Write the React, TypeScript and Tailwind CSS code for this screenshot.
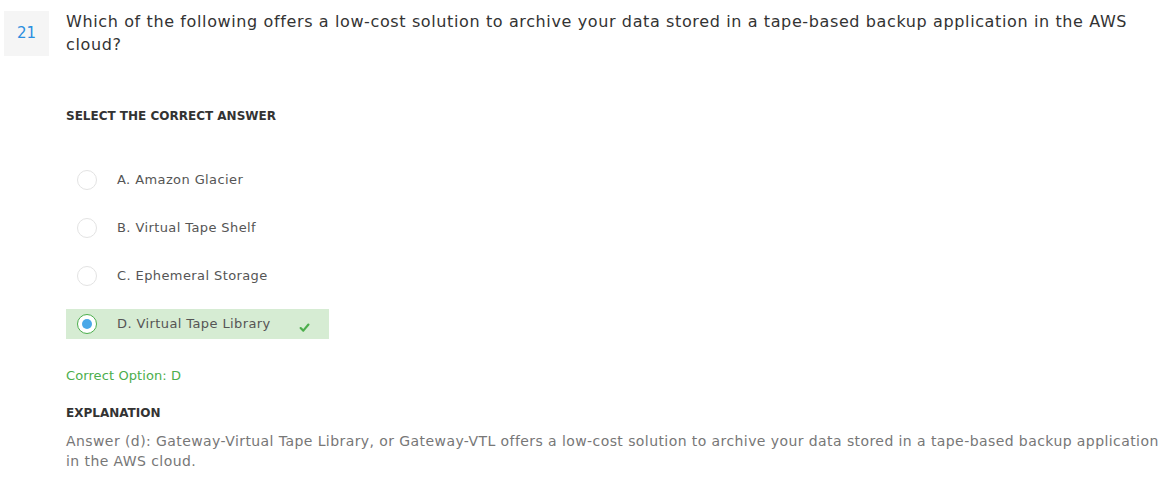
import React from "react";

type Option = { key: string; label: string };

const options: Option[] = [
  { key: "A", label: "Amazon Glacier" },
  { key: "B", label: "Virtual Tape Shelf" },
  { key: "C", label: "Ephemeral Storage" },
  { key: "D", label: "Virtual Tape Library" },
];

const correct = "D";

function Radio({ checked }: { checked: boolean }) {
  if (checked) {
    return (
      <span className="flex h-5 w-5 items-center justify-center rounded-full border border-[#4cae4c] bg-white">
        <span className="h-[10px] w-[10px] rounded-full bg-[#4aa8e8]" />
      </span>
    );
  }
  return <span className="h-5 w-5 rounded-full border border-[#e3e3e3] bg-white" />;
}

export default function App() {
  return (
    <div
      className="min-h-screen w-full bg-white text-[#333]"
      style={{ fontFamily: '"DejaVu Sans", "Open Sans", sans-serif' }}
    >
      <div className="flex items-start pt-[11px] pl-1">
        <div className="flex h-[45px] w-[45px] shrink-0 items-center justify-center bg-[#f5f5f5] text-[15px] text-[#2a8ee0]">
          21
        </div>
        <p className="ml-[17px] -mt-[1px] pr-10 text-[16px] leading-[23px] tracking-[0.62px] text-[#333]">
          Which of the following offers a low-cost solution to archive your data stored in a tape-based backup application in the AWS cloud?
        </p>
      </div>

      <div className="pl-[66px]">
        <h3 className="mt-[51px] text-[12px] font-bold text-[#333]">
          SELECT THE CORRECT ANSWER
        </h3>

        <ul className="mt-[40px] flex flex-col">
          {options.map((o) => {
            const isRight = o.key === correct;
            return (
              <li
                key={o.key}
                className={
                  "flex h-[30px] w-[263px] items-center pl-[11px] mb-[18px] " +
                  (isRight ? "bg-[#d6ecd3]" : "")
                }
              >
                <Radio checked={isRight} />
                <span className="ml-[20px] text-[13px] tracking-[0.4px] text-[#555]">
                  {o.key}. {o.label}
                </span>
                {isRight && (
                  <svg className="ml-[28px] mt-[6px] h-[11px] w-[11px]" viewBox="0 0 12 12" fill="none">
                    <path d="M1.8 6.6l2.9 2.8 5.6-6.6" stroke="#4cae4c" strokeWidth="2.4" strokeLinecap="round" strokeLinejoin="round" />
                  </svg>
                )}
              </li>
            );
          })}
        </ul>

        <div className="mt-[9px] text-[13px] font-normal tracking-[0.1px] text-[#4cae4c]">Correct Option: D</div>

        <h3 className="mt-[18px] text-[12px] font-bold text-[#333]">EXPLANATION</h3>
        <p className="mt-[9px] text-[14px] leading-[20px] tracking-[0.42px] text-[#777]">
          Answer (d): Gateway-Virtual Tape Library, or Gateway-VTL offers a low-cost solution to archive your data stored in a tape-based backup application in the AWS cloud.
        </p>
      </div>
    </div>
  );
}
